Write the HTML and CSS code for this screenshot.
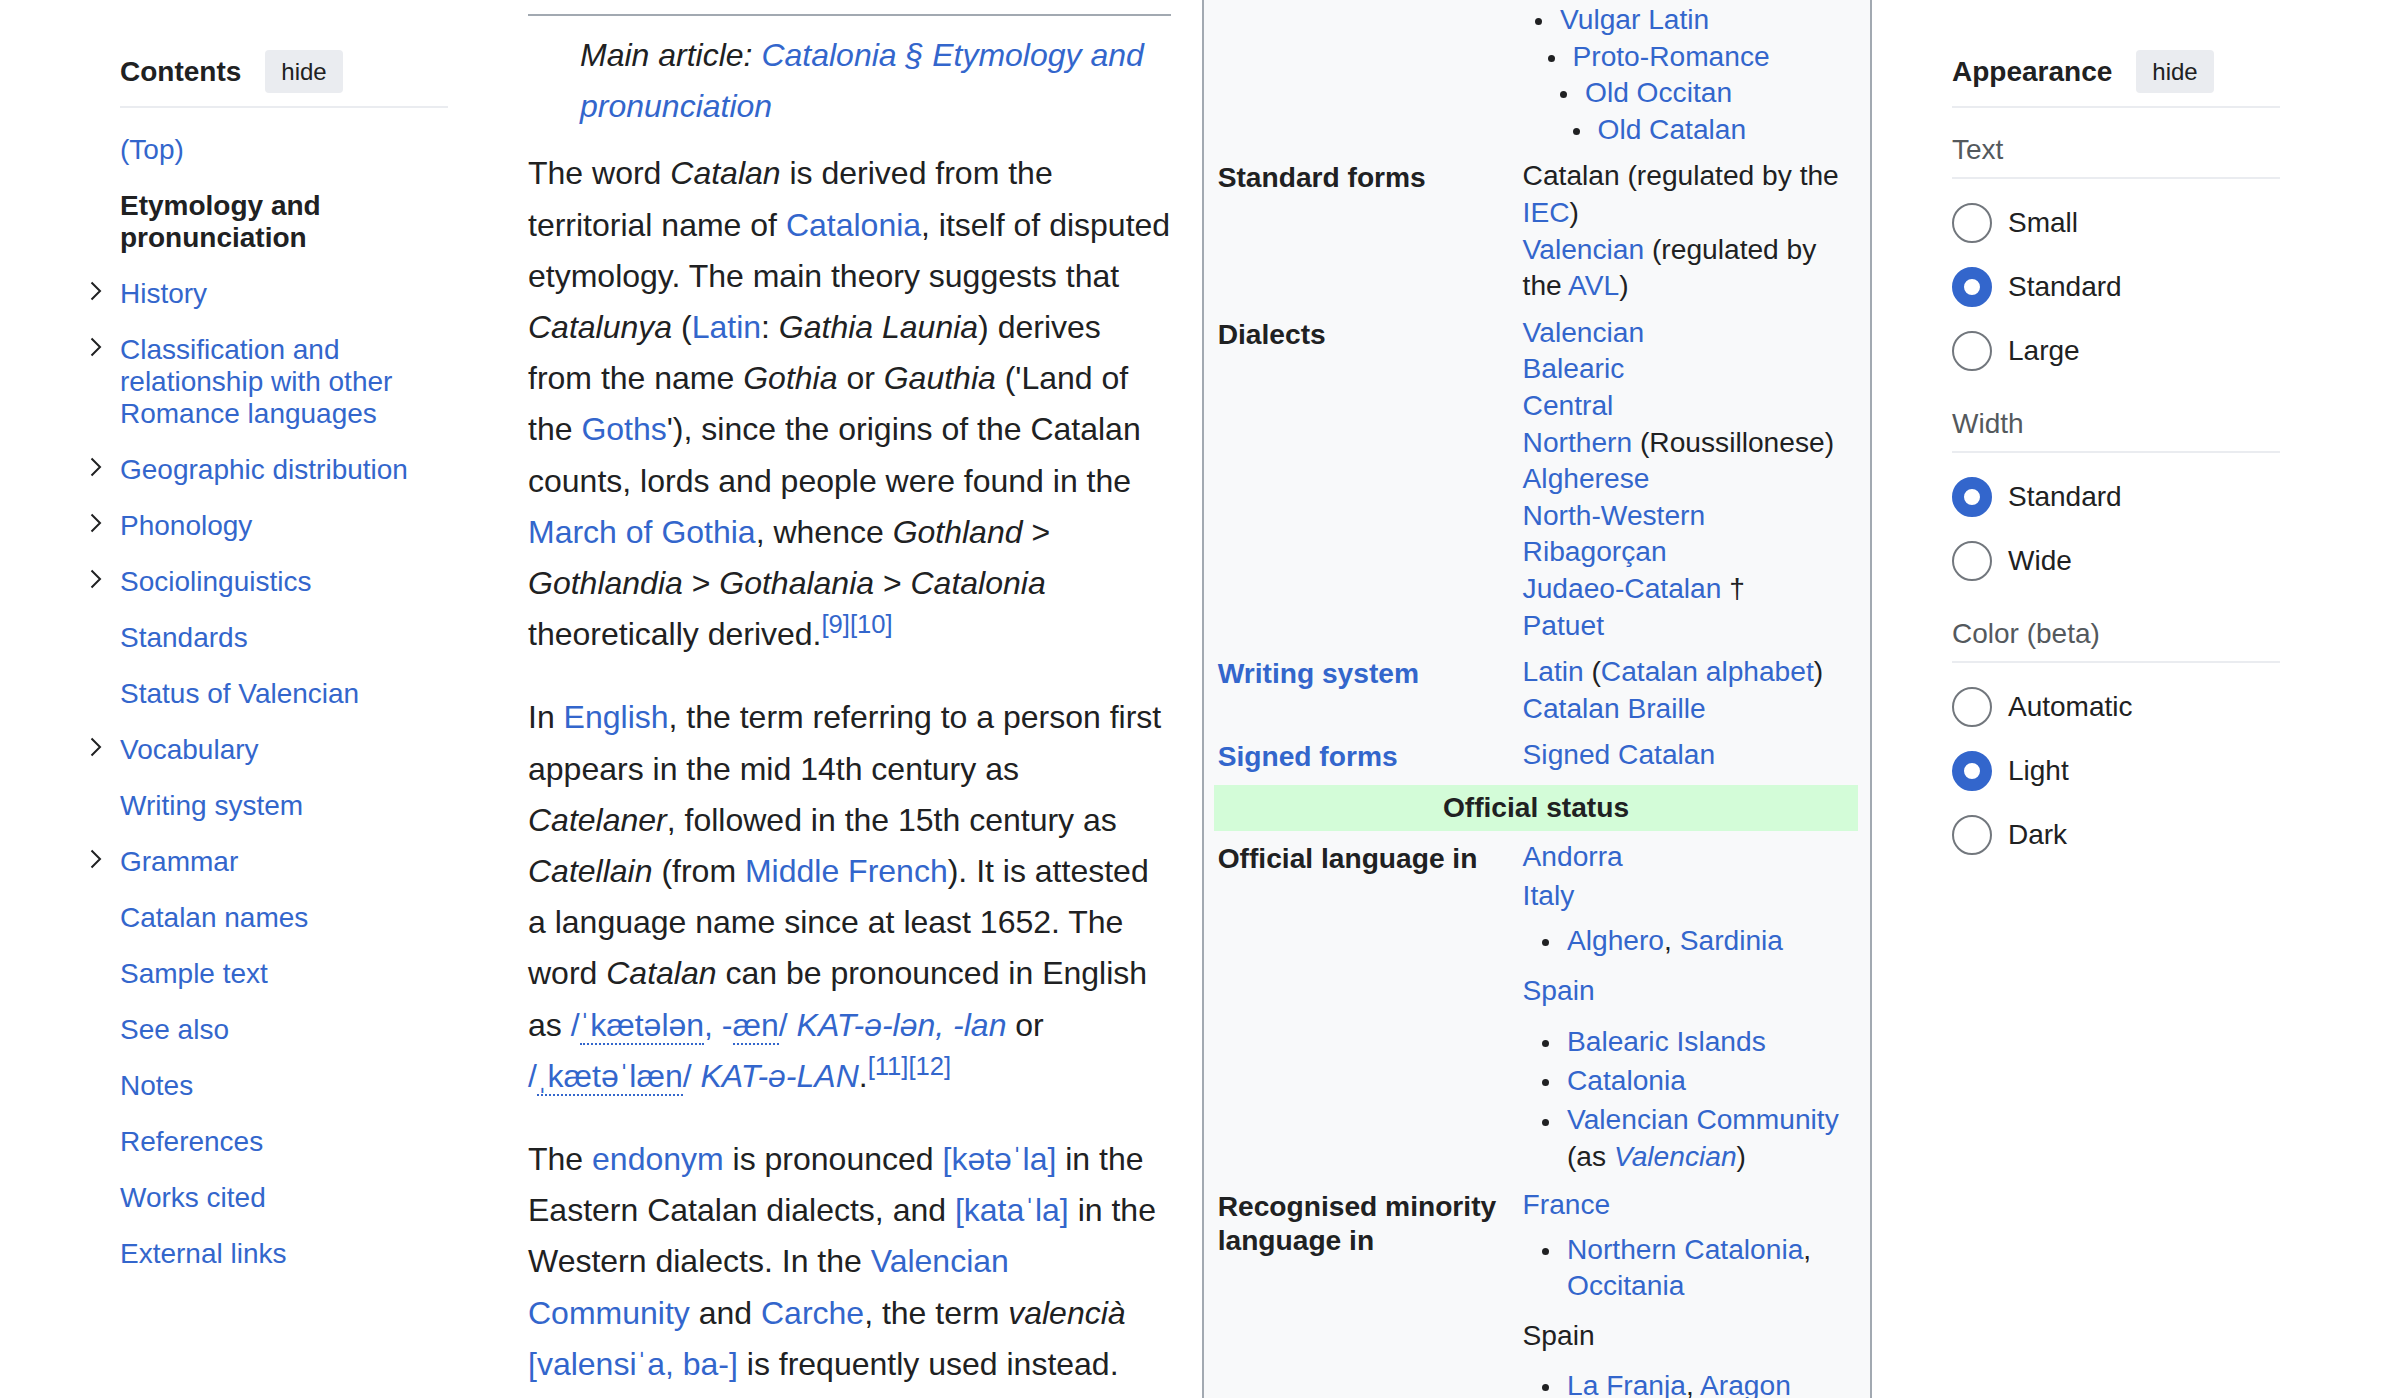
FILE: index.html
```html
<!DOCTYPE html>
<html lang="en">
<head>
<meta charset="utf-8">
<title>Catalan language</title>
<link rel="stylesheet" href="styles.css">
</head>
<body>
<div class="page">
  <nav class="sidebar">
    <div class="sidebar-header">
      <div class="sidebar-title">Contents</div>
      <button class="hide-btn">hide</button>
    </div>
    <ul class="toc-list">
      <li class="toc-item"><a href="#">(Top)</a></li>
      <li class="toc-item current"><span>Etymology and pronunciation</span></li>
      <li class="toc-item"><span class="toc-toggle"><svg width="12" height="20" viewBox="0 0 12 20"><path d="M1.5 1.5 L10 10 L1.5 18.5" fill="none" stroke="#202122" stroke-width="2"/></svg></span><a href="#">History</a></li>
      <li class="toc-item"><span class="toc-toggle"><svg width="12" height="20" viewBox="0 0 12 20"><path d="M1.5 1.5 L10 10 L1.5 18.5" fill="none" stroke="#202122" stroke-width="2"/></svg></span><a href="#">Classification and relationship with other Romance languages</a></li>
      <li class="toc-item"><span class="toc-toggle"><svg width="12" height="20" viewBox="0 0 12 20"><path d="M1.5 1.5 L10 10 L1.5 18.5" fill="none" stroke="#202122" stroke-width="2"/></svg></span><a href="#">Geographic distribution</a></li>
      <li class="toc-item"><span class="toc-toggle"><svg width="12" height="20" viewBox="0 0 12 20"><path d="M1.5 1.5 L10 10 L1.5 18.5" fill="none" stroke="#202122" stroke-width="2"/></svg></span><a href="#">Phonology</a></li>
      <li class="toc-item"><span class="toc-toggle"><svg width="12" height="20" viewBox="0 0 12 20"><path d="M1.5 1.5 L10 10 L1.5 18.5" fill="none" stroke="#202122" stroke-width="2"/></svg></span><a href="#">Sociolinguistics</a></li>
      <li class="toc-item"><a href="#">Standards</a></li>
      <li class="toc-item"><a href="#">Status of Valencian</a></li>
      <li class="toc-item"><span class="toc-toggle"><svg width="12" height="20" viewBox="0 0 12 20"><path d="M1.5 1.5 L10 10 L1.5 18.5" fill="none" stroke="#202122" stroke-width="2"/></svg></span><a href="#">Vocabulary</a></li>
      <li class="toc-item"><a href="#">Writing system</a></li>
      <li class="toc-item"><span class="toc-toggle"><svg width="12" height="20" viewBox="0 0 12 20"><path d="M1.5 1.5 L10 10 L1.5 18.5" fill="none" stroke="#202122" stroke-width="2"/></svg></span><a href="#">Grammar</a></li>
      <li class="toc-item"><a href="#">Catalan names</a></li>
      <li class="toc-item"><a href="#">Sample text</a></li>
      <li class="toc-item"><a href="#">See also</a></li>
      <li class="toc-item"><a href="#">Notes</a></li>
      <li class="toc-item"><a href="#">References</a></li>
      <li class="toc-item"><a href="#">Works cited</a></li>
      <li class="toc-item"><a href="#">External links</a></li>
    </ul>
  </nav>

  <main class="main">
    <div class="article">
      <div class="section-rule"></div>
      <div class="hatnote">Main article: <a href="#">Catalonia §&nbsp;Etymology and pronunciation</a></div>
      <p>The word <i>Catalan</i> is derived from the territorial name of <a href="#">Catalonia</a>, itself of disputed etymology. The main theory suggests that <i>Catalunya</i> (<a href="#">Latin</a>: <i>Gathia Launia</i>) derives from the name <i>Gothia</i> or <i>Gauthia</i> ('Land of the <a href="#">Goths</a>'), since the origins of the Catalan counts, lords and people were found in the <a href="#">March of Gothia</a>, whence <i>Gothland</i> &gt; <i>Gothlandia</i> &gt; <i>Gothalania</i> &gt; <i>Catalonia</i> theoretically derived.<sup><a href="#">[9]</a><a href="#">[10]</a></sup></p>
      <p>In <a href="#">English</a>, the term referring to a person first appears in the mid 14th century as <i>Catelaner</i>, followed in the 15th century as <i>Catellain</i> (from <a href="#">Middle French</a>). It is attested a language name since at least 1652. The word <i>Catalan</i> can be pronounced in English as <span class="nowrap"><a class="ipa" href="#">/<span class="ipa-seg">ˈkætələn</span>, -<span class="ipa-seg">æn</span>/</a> <a href="#"><i>KAT-ə-lən, -lan</i></a></span> or <span class="nowrap"><a class="ipa" href="#">/<span class="ipa-seg">ˌkætəˈlæn</span>/</a> <a href="#"><i>KAT-ə-LAN</i></a></span>.<sup><a href="#">[11]</a><a href="#">[12]</a></sup></p>
      <p>The <a href="#">endonym</a> is pronounced <a class="ipa" href="#">[kətəˈla]</a> in the Eastern Catalan dialects, and <a class="ipa" href="#">[kataˈla]</a> in the Western dialects. In the <a href="#">Valencian Community</a> and <a href="#">Carche</a>, the term <i>valencià</i> <a class="ipa" href="#">[valensiˈa, ba-]</a> is frequently used instead.</p>
    </div>

    <aside class="infobox">
      <div class="ib-label"></div>
      <div class="ib-data">
        <ul class="tree">
          <li><a href="#">Vulgar Latin</a>
            <ul><li><a href="#">Proto-Romance</a>
              <ul><li><a href="#">Old Occitan</a>
                <ul><li><a href="#">Old Catalan</a></li></ul>
              </li></ul>
            </li></ul>
          </li>
        </ul>
      </div>

      <div class="ib-label">Standard forms</div>
      <div class="ib-data">
        <div>Catalan (regulated by the <a href="#">IEC</a>)</div>
        <div><a href="#">Valencian</a> (regulated by the <a href="#">AVL</a>)</div>
      </div>

      <div class="ib-label">Dialects</div>
      <div class="ib-data">
        <div><a href="#">Valencian</a></div>
        <div><a href="#">Balearic</a></div>
        <div><a href="#">Central</a></div>
        <div><a href="#">Northern</a> (Roussillonese)</div>
        <div><a href="#">Algherese</a></div>
        <div><a href="#">North-Western</a></div>
        <div><a href="#">Ribagorçan</a></div>
        <div><a href="#">Judaeo-Catalan</a> †</div>
        <div><a href="#">Patuet</a></div>
      </div>

      <div class="ib-label"><a href="#">Writing system</a></div>
      <div class="ib-data">
        <div><a href="#">Latin</a> (<a href="#">Catalan alphabet</a>)</div>
        <div><a href="#">Catalan Braille</a></div>
      </div>

      <div class="ib-label"><a href="#">Signed forms</a></div>
      <div class="ib-data">
        <div><a href="#">Signed Catalan</a></div>
      </div>

      <div class="ib-band">Official status</div>

      <div class="ib-label">Official language in</div>
      <div class="ib-data ib-data-official">
        <ul class="plainlist">
          <li><a href="#">Andorra</a></li>
          <li><a href="#">Italy</a>
            <ul class="bullets"><li><a href="#">Alghero</a>, <a href="#">Sardinia</a></li></ul>
          </li>
          <li class="country-gap"><a href="#">Spain</a>
            <ul class="bullets bullets-wide"><li><a href="#">Balearic Islands</a></li><li><a href="#">Catalonia</a></li><li><a href="#">Valencian Community</a> (as <a href="#"><i>Valencian</i></a>)</li></ul>
          </li>
        </ul>
      </div>

      <div class="ib-label">Recognised minority language in</div>
      <div class="ib-data">
        <ul class="plainlist">
          <li><a href="#">France</a>
            <ul class="bullets"><li><a href="#">Northern Catalonia</a>, <a href="#">Occitania</a></li></ul>
          </li>
          <li class="country-gap">Spain
            <ul class="bullets bullets-mid"><li><a href="#">La Franja</a>, <a href="#">Aragon</a></li><li><a href="#">Carche</a>, <a href="#">Murcia</a></li></ul>
          </li>
        </ul>
      </div>
    </aside>
  </main>

  <aside class="sidebar">
    <div class="sidebar-header">
      <div class="sidebar-title">Appearance</div>
      <button class="hide-btn">hide</button>
    </div>
    <div class="app-group first">
      <div class="group-heading">Text</div>
      <div class="radio-list">
        <div class="radio-row"><span class="radio"></span><span>Small</span></div>
        <div class="radio-row"><span class="radio checked"></span><span>Standard</span></div>
        <div class="radio-row"><span class="radio"></span><span>Large</span></div>
      </div>
    </div>
    <div class="app-group">
      <div class="group-heading">Width</div>
      <div class="radio-list">
        <div class="radio-row"><span class="radio checked"></span><span>Standard</span></div>
        <div class="radio-row"><span class="radio"></span><span>Wide</span></div>
      </div>
    </div>
    <div class="app-group">
      <div class="group-heading">Color (beta)</div>
      <div class="radio-list">
        <div class="radio-row"><span class="radio"></span><span>Automatic</span></div>
        <div class="radio-row"><span class="radio checked"></span><span>Light</span></div>
        <div class="radio-row"><span class="radio"></span><span>Dark</span></div>
      </div>
    </div>
  </aside>
</div>
</body>
</html>
```

FILE: styles.css
```css
* { box-sizing: border-box; }

html, body {
  margin: 0;
  padding: 0;
  background: #ffffff;
  overflow: hidden;
}

body {
  width: 2400px;
  height: 1398px;
  font-family: "Liberation Sans", Arial, Helvetica, "Noto Sans", sans-serif;
  color: #202122;
}

a {
  color: #3366cc;
  text-decoration: none;
}

.page {
  display: grid;
  grid-template-columns: 328px 1344px 328px;
  column-gap: 80px;
  padding: 0 120px;
  align-items: start;
}

/* ---------- sidebars ---------- */
.sidebar {
  padding-top: 50px;
  font-size: 28px;
}

.sidebar-header {
  display: flex;
  align-items: center;
  gap: 24px;
  padding-bottom: 13px;
  border-bottom: 2px solid #eaecf0;
}

.sidebar-title {
  font-weight: bold;
  font-size: 28px;
  line-height: 32px;
}

.hide-btn {
  font-family: inherit;
  font-size: 24px;
  color: #202122;
  background: #eaecf0;
  border: none;
  border-radius: 4px;
  height: 43px;
  padding: 0 16px;
  line-height: 43px;
}

.toc-list {
  list-style: none;
  margin: 13.5px 0 0;
  padding: 0;
}

.toc-item {
  display: flex;
  padding: 12px 0;
  line-height: 32px;
}

.toc-item.current {
  font-weight: bold;
}

.toc-toggle {
  flex: none;
  width: 30px;
  margin-left: -30px;
  height: 32px;
  padding-top: 3px;
  display: flex;
  align-items: flex-start;
}

.app-group {
  margin-top: 25px;
}

.app-group.first {
  margin-top: 26px;
}

.group-heading {
  line-height: 32px;
  color: #54595d;
  padding-bottom: 11px;
  border-bottom: 2px solid #eaecf0;
}

.radio-list {
  margin-top: 12px;
}

.radio-row {
  display: flex;
  align-items: center;
  height: 64px;
}

.radio {
  flex: none;
  width: 40px;
  height: 40px;
  border-radius: 50%;
  border: 2px solid #72777d;
  background: #ffffff;
  margin-right: 16px;
}

.radio.checked {
  border: 12px solid #3366cc;
}

/* ---------- main ---------- */
.main {
  display: grid;
  grid-template-columns: 643px 670px;
  column-gap: 31px;
  align-items: start;
}

.article {
  font-size: 32px;
  line-height: 51.2px;
}

.section-rule {
  margin-top: 14px;
  border-bottom: 2px solid #a2a9b1;
}

.hatnote {
  font-style: italic;
  padding-left: 52px;
  margin: 14px 0 16px;
}

.article p {
  margin: 16px 0 32px;
}

.article sup {
  font-size: 0.8em;
  line-height: 1;
  vertical-align: super;
}

.nowrap {
  white-space: nowrap;
}

.ipa {
  font-family: "Liberation Sans", "Noto Sans", sans-serif;
}

.ipa-seg {
  border-bottom: 2px dotted #3366cc;
}

/* ---------- infobox ---------- */
.infobox {
  display: grid;
  grid-template-columns: 299.6px 338.4px;
  column-gap: 6px;
  row-gap: 6px;
  font-size: 28.16px;
  line-height: 36.6px;
  background: #f8f9fa;
  border: 2px solid #a2a9b1;
  border-top: none;
  padding: 0 12px 10px 10px;
  color: #202122;
}

.ib-label {
  font-weight: bold;
  line-height: 34px;
  padding: 5px 3px 2px 3.7px;
}

.ib-data {
  padding: 2px 3px;
}

.ib-data-official {
  padding-bottom: 3px;
}

.ib-band {
  grid-column: 1 / -1;
  margin-top: 3px;
  padding: 4.5px;
  text-align: center;
  font-weight: bold;
  background: #d3fcd8;
}

.infobox ul {
  list-style: none;
  margin: 0;
  padding: 0;
}

.tree {
  padding-left: 37.4px !important;
}

.tree ul {
  padding-left: 12.5px !important;
}

.tree li::before,
.bullets li::before {
  content: "";
  display: inline-block;
  width: 7px;
  height: 7px;
  border-radius: 50%;
  background: #202122;
  margin-left: -24.5px;
  margin-right: 17.5px;
  vertical-align: middle;
}

.plainlist > li + li {
  margin-top: 2.5px;
}

.plainlist > li.country-gap {
  margin-top: 13.5px;
}

.bullets {
  margin-top: 8.5px !important;
  padding-left: 44.4px !important;
}

.bullets.bullets-wide {
  margin-top: 14.5px !important;
}

.bullets.bullets-mid {
  margin-top: 12.5px !important;
}

.bullets li + li {
  margin-top: 2.5px;
}
```
